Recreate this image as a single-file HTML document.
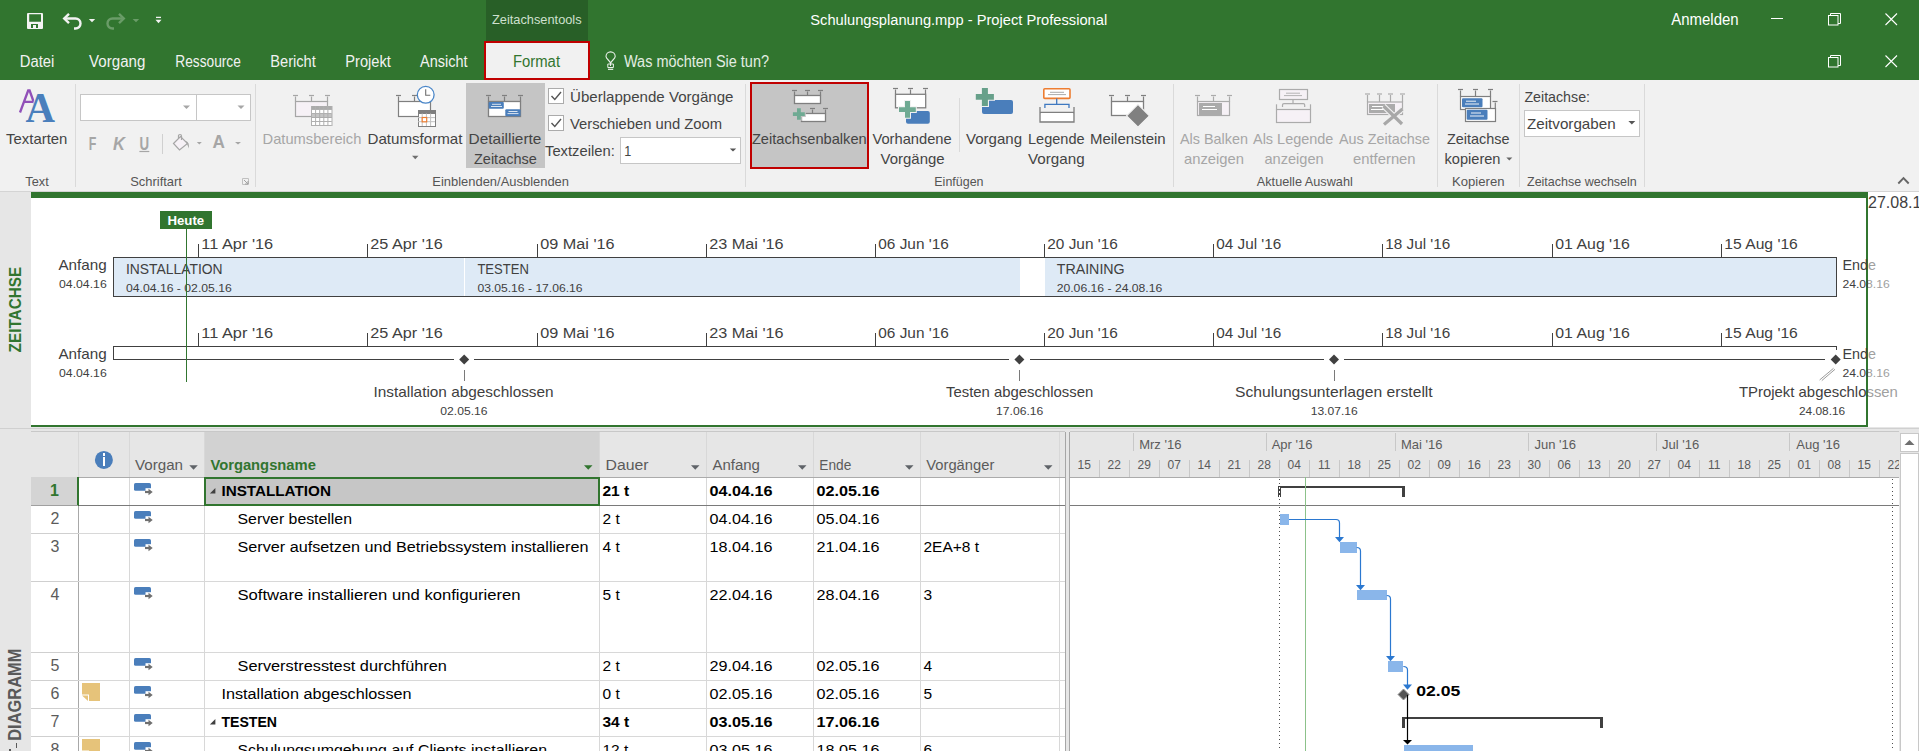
<!DOCTYPE html>
<html><head><meta charset="utf-8"><title>Schulungsplanung.mpp - Project Professional</title>
<style>html,body{margin:0;padding:0;background:#fff;overflow:hidden;width:1919px;height:751px}
svg{display:block;font-family:"Liberation Sans", sans-serif}</style></head>
<body><svg width="1919" height="751" viewBox="0 0 1919 751">
<defs><clipPath id="clipR"><rect x="1868" y="197" width="51" height="230"/></clipPath></defs>
<rect x="0" y="0" width="1919" height="80" fill="#31752F" shape-rendering="crispEdges" />
<rect x="486" y="0" width="102" height="41" fill="#285F27" shape-rendering="crispEdges" />
<text x="492" y="24.4" font-size="13.5" fill="#CFE0CE" textLength="89.6" lengthAdjust="spacingAndGlyphs" >Zeitachsentools</text>
<text x="810.3" y="25" font-size="15.5" fill="#FFFFFF" textLength="296.9" lengthAdjust="spacingAndGlyphs" >Schulungsplanung.mpp - Project Professional</text>
<text x="1671.3" y="25" font-size="16" fill="#FFFFFF" textLength="67.3" lengthAdjust="spacingAndGlyphs" >Anmelden</text>
<line x1="1771" y1="18.5" x2="1783" y2="18.5" stroke="#fff" stroke-width="1" shape-rendering="crispEdges" />
<rect x="1828.5" y="15.5" width="9.5" height="9.5" fill="none" stroke="#fff" stroke-width="1" />
<path d="M1830.5 15.5 V13.5 H1840.5 V23.5 H1838" fill="none" stroke="#fff" stroke-width="1" />
<path d="M1885.5 13.5 L1897 25 M1897 13.5 L1885.5 25" fill="none" stroke="#fff" stroke-width="1.1" />
<rect x="1828.5" y="57.5" width="9.5" height="9.5" fill="none" stroke="#fff" stroke-width="1" />
<path d="M1830.5 57.5 V55.5 H1840.5 V65.5 H1838" fill="none" stroke="#fff" stroke-width="1" />
<path d="M1885.5 55.5 L1897 67 M1897 55.5 L1885.5 67" fill="none" stroke="#fff" stroke-width="1.1" />
<path d="M28 13 H42 Q43 13 43 14 V28 Q43 29 42 29 H28 Q27 29 27 28 V14 Q27 13 28 13 Z M29.2 14.3 V21.7 H41 V14.3 Z M31 24 V28 H38 V24 Z" fill="#F4F4F4" fill-rule="evenodd"/>
<rect x="33" y="25.2" width="3" height="2.8" fill="#F4F4F4" shape-rendering="crispEdges" />
<path d="M65 18.5 H75.5 A5 5 0 0 1 75.5 28.5 H74" fill="none" stroke="#F2F2F2" stroke-width="2.4" />
<path d="M69 13.8 L64.2 18.5 L69 23.2" fill="none" stroke="#F2F2F2" stroke-width="2.4" />
<path d="M88.8 19 H95.2 L92 22.2 Z" fill="#F2F2F2" />
<path d="M123 18.5 H112.5 A5 5 0 0 0 112.5 28.5 H114" fill="none" stroke="#6A9C68" stroke-width="2.4" />
<path d="M119 13.8 L123.8 18.5 L119 23.2" fill="none" stroke="#6A9C68" stroke-width="2.4" />
<path d="M132.6 19 H139.2 L136 22.2 Z" fill="#6A9C68" />
<line x1="156" y1="17.4" x2="161" y2="17.4" stroke="#F2F2F2" stroke-width="1.3" />
<path d="M155.5 19.7 H161.5 L158.5 23.2 Z" fill="#F2F2F2" />
<text x="19.7" y="66.7" font-size="16" fill="#F2F2F2" textLength="34.6" lengthAdjust="spacingAndGlyphs" >Datei</text>
<text x="89.1" y="66.7" font-size="16" fill="#F2F2F2" textLength="56.2" lengthAdjust="spacingAndGlyphs" >Vorgang</text>
<text x="175.3" y="66.7" font-size="16" fill="#F2F2F2" textLength="65.5" lengthAdjust="spacingAndGlyphs" >Ressource</text>
<text x="270.3" y="66.7" font-size="16" fill="#F2F2F2" textLength="45.5" lengthAdjust="spacingAndGlyphs" >Bericht</text>
<text x="345.3" y="66.7" font-size="16" fill="#F2F2F2" textLength="45.5" lengthAdjust="spacingAndGlyphs" >Projekt</text>
<text x="420" y="66.7" font-size="16" fill="#F2F2F2" textLength="47.5" lengthAdjust="spacingAndGlyphs" >Ansicht</text>
<rect x="484" y="41" width="106" height="39" fill="#F1F1F1" shape-rendering="crispEdges" />
<rect x="485" y="42" width="104" height="37" fill="none" stroke="#C00000" stroke-width="2" shape-rendering="crispEdges" />
<text x="513" y="67" font-size="16" fill="#31752F" textLength="47" lengthAdjust="spacingAndGlyphs" >Format</text>
<path d="M610.5 66 V63.5 C610.5 61 606 59 606 56.5 A4.6 4.6 0 0 1 615.2 56.5 C615.2 59 610.7 61 610.7 63.5" fill="none" stroke="#EAF1EA" stroke-width="1.1" />
<path d="M607.8 64 H613.4 V67.5 H607.8 Z" fill="none" stroke="#EAF1EA" stroke-width="1" />
<line x1="608" y1="69.3" x2="613.2" y2="69.3" stroke="#EAF1EA" stroke-width="1.2" />
<text x="624" y="67" font-size="16" fill="#E3EDE2" textLength="145" lengthAdjust="spacingAndGlyphs" >Was möchten Sie tun?</text>
<rect x="0" y="80" width="1919" height="111" fill="#F1F1F1" shape-rendering="crispEdges" />
<line x1="0" y1="191.5" x2="1919" y2="191.5" stroke="#D4D4D4" stroke-width="1" shape-rendering="crispEdges" />
<line x1="75.5" y1="84" x2="75.5" y2="187" stroke="#DADADA" stroke-width="1" shape-rendering="crispEdges" />
<line x1="255.5" y1="84" x2="255.5" y2="187" stroke="#DADADA" stroke-width="1" shape-rendering="crispEdges" />
<line x1="745.5" y1="84" x2="745.5" y2="187" stroke="#DADADA" stroke-width="1" shape-rendering="crispEdges" />
<line x1="1173.5" y1="84" x2="1173.5" y2="187" stroke="#DADADA" stroke-width="1" shape-rendering="crispEdges" />
<line x1="1437.5" y1="84" x2="1437.5" y2="187" stroke="#DADADA" stroke-width="1" shape-rendering="crispEdges" />
<line x1="1519.5" y1="84" x2="1519.5" y2="187" stroke="#DADADA" stroke-width="1" shape-rendering="crispEdges" />
<line x1="1644.5" y1="84" x2="1644.5" y2="187" stroke="#DADADA" stroke-width="1" shape-rendering="crispEdges" />
<path d="M20 112.5 L28.2 90.5 H29.6 L34.8 105 M23.5 101.8 H33.5" fill="none" stroke="#9150B8" stroke-width="2.3" />
<text x="25.5" y="122" font-size="42" fill="#4A7FBC" textLength="29.5" lengthAdjust="spacingAndGlyphs" font-weight="bold" font-family='"Liberation Serif", serif' stroke="#F1F1F1" stroke-width="1.5" paint-order="stroke">A</text>
<text x="6.1" y="143.7" font-size="15" fill="#444444" textLength="61.3" lengthAdjust="spacingAndGlyphs" >Textarten</text>
<text x="25.3" y="185.8" font-size="13" fill="#555" textLength="23.4" lengthAdjust="spacingAndGlyphs" >Text</text>
<rect x="80.5" y="94.5" width="170" height="26" fill="#FFFFFF" stroke="#C6C6C6" stroke-width="1" shape-rendering="crispEdges" />
<line x1="196" y1="95" x2="196" y2="120" stroke="#C6C6C6" stroke-width="1" shape-rendering="crispEdges" />
<path d="M183 105.5 H190 L186.5 109 Z" fill="#A6A6A6" />
<path d="M237.5 105.5 H244.5 L241 109 Z" fill="#A6A6A6" />
<text x="88.8" y="149.9" font-size="17.5" fill="#A6A6A6" textLength="7.6" lengthAdjust="spacingAndGlyphs" font-weight="bold" >F</text>
<text x="113" y="149.9" font-size="17.5" fill="#A6A6A6" textLength="12" lengthAdjust="spacingAndGlyphs" font-weight="bold" style="font-style:italic" >K</text>
<text x="139.6" y="149.9" font-size="17.5" fill="#A6A6A6" textLength="9.6" lengthAdjust="spacingAndGlyphs" font-weight="bold" >U</text>
<line x1="139.4" y1="151.5" x2="149.3" y2="151.5" stroke="#A6A6A6" stroke-width="1.2" />
<line x1="162.5" y1="133.6" x2="162.5" y2="154.3" stroke="#D0D0D0" stroke-width="1" shape-rendering="crispEdges" />
<path d="M173.5 143.5 L180.5 136.5 L187.5 143.5 L179.5 150 Z" fill="#F6F1F6" stroke="#A6A6A6" stroke-width="1.2" />
<path d="M178.5 138.5 V135.5 Q178.5 134.5 180 134.5 Q181.5 134.5 181.5 136 V140" fill="none" stroke="#A6A6A6" stroke-width="1.2" />
<path d="M185.5 141 Q189.5 141.5 189 148.5 L187 144 Z" fill="#A6A6A6" />
<path d="M196.8 142 H201.8 L199.3 144.5 Z" fill="#A6A6A6" />
<text x="212.6" y="147.9" font-size="19" fill="#A6A6A6" textLength="12.4" lengthAdjust="spacingAndGlyphs" font-weight="bold" >A</text>
<path d="M235 142 H241 L238 144.5 Z" fill="#A6A6A6" />
<text x="130.2" y="185.8" font-size="13" fill="#555" textLength="51.7" lengthAdjust="spacingAndGlyphs" >Schriftart</text>
<path d="M242.5 178.5 H248.5 V184.5 H242.5 Z" fill="none" stroke="#C0C0C0" stroke-width="1" />
<path d="M244 180 L248 184 M245 184 H248 V181" fill="none" stroke="#A0A0A0" stroke-width="1" />
<line x1="293.0" y1="95.5" x2="298.0" y2="95.5" stroke="#A6A6A6" stroke-width="1.2" />
<line x1="295.5" y1="96.5" x2="295.5" y2="101.5" stroke="#A6A6A6" stroke-width="1.2" />
<line x1="309.0" y1="95.5" x2="314.0" y2="95.5" stroke="#A6A6A6" stroke-width="1.2" />
<line x1="311.5" y1="96.5" x2="311.5" y2="101.5" stroke="#A6A6A6" stroke-width="1.2" />
<line x1="325.0" y1="95.5" x2="330.0" y2="95.5" stroke="#A6A6A6" stroke-width="1.2" />
<line x1="327.5" y1="96.5" x2="327.5" y2="101.5" stroke="#A6A6A6" stroke-width="1.2" />
<rect x="295.5" y="101.5" width="32" height="15" fill="#F6F1F6" stroke="#A6A6A6" stroke-width="1.2" />
<rect x="311" y="106" width="21" height="20" fill="#FFFFFF" shape-rendering="crispEdges" />
<rect x="311" y="106" width="20.8" height="3.5" fill="#ABABAB" shape-rendering="crispEdges" />
<line x1="311.5" y1="106" x2="311.5" y2="126" stroke="#B0B0B0" stroke-width="1" />
<line x1="315.6" y1="106" x2="315.6" y2="126" stroke="#B0B0B0" stroke-width="1" />
<line x1="319.7" y1="106" x2="319.7" y2="126" stroke="#B0B0B0" stroke-width="1" />
<line x1="323.8" y1="106" x2="323.8" y2="126" stroke="#B0B0B0" stroke-width="1" />
<line x1="327.9" y1="106" x2="327.9" y2="126" stroke="#B0B0B0" stroke-width="1" />
<line x1="332.0" y1="106" x2="332.0" y2="126" stroke="#B0B0B0" stroke-width="1" />
<line x1="311" y1="109.5" x2="331.8" y2="109.5" stroke="#B0B0B0" stroke-width="1" />
<line x1="311" y1="113.5" x2="331.8" y2="113.5" stroke="#B0B0B0" stroke-width="1" />
<line x1="311" y1="117.5" x2="331.8" y2="117.5" stroke="#B0B0B0" stroke-width="1" />
<line x1="311" y1="121.5" x2="331.8" y2="121.5" stroke="#B0B0B0" stroke-width="1" />
<line x1="311" y1="125.5" x2="331.8" y2="125.5" stroke="#B0B0B0" stroke-width="1" />
<rect x="311" y="114" width="21" height="3.5" fill="#ABABAB" shape-rendering="crispEdges" opacity="0.7"/>
<text x="262.6" y="143.7" font-size="15" fill="#A6A6A6" textLength="98.8" lengthAdjust="spacingAndGlyphs" >Datumsbereich</text>
<line x1="396.0" y1="95.5" x2="401.0" y2="95.5" stroke="#7F7F7F" stroke-width="1.2" />
<line x1="398.5" y1="96.5" x2="398.5" y2="101.5" stroke="#7F7F7F" stroke-width="1.2" />
<line x1="412.0" y1="95.5" x2="417.0" y2="95.5" stroke="#7F7F7F" stroke-width="1.2" />
<line x1="414.5" y1="96.5" x2="414.5" y2="101.5" stroke="#7F7F7F" stroke-width="1.2" />
<rect x="398.5" y="101.5" width="32" height="15" fill="#FFFFFF" stroke="#7F7F7F" stroke-width="1.2" />
<rect x="418" y="110" width="17" height="16" fill="#FFFFFF" stroke="#7F7F7F" stroke-width="1" shape-rendering="crispEdges" />
<rect x="418" y="110" width="17" height="3.5" fill="#7F7F7F" shape-rendering="crispEdges" />
<line x1="422.2" y1="113.5" x2="422.2" y2="126" stroke="#C0C0C0" stroke-width="1" />
<line x1="426.4" y1="113.5" x2="426.4" y2="126" stroke="#C0C0C0" stroke-width="1" />
<line x1="430.6" y1="113.5" x2="430.6" y2="126" stroke="#C0C0C0" stroke-width="1" />
<line x1="418" y1="117.6" x2="435" y2="117.6" stroke="#C0C0C0" stroke-width="1" />
<line x1="418" y1="121.7" x2="435" y2="121.7" stroke="#C0C0C0" stroke-width="1" />
<rect x="422.2" y="117.5" width="4.5" height="4.3" fill="#FFFFFF" stroke="#ED7D31" stroke-width="1.2" />
<circle cx="425.7" cy="94.8" r="8.4" fill="#FFFFFF" stroke="#4A86C8" stroke-width="1.3"/>
<path d="M425.7 89.2 V95.2 H430.3" fill="none" stroke="#6F6F6F" stroke-width="1.1" />
<text x="367.5" y="143.7" font-size="15" fill="#444444" textLength="95" lengthAdjust="spacingAndGlyphs" >Datumsformat</text>
<path d="M412 155.8 H418.5 L415.25 159.3 Z" fill="#6F6F6F" />
<rect x="466" y="83" width="79" height="85" fill="#C5C5C5" shape-rendering="crispEdges" />
<line x1="486.0" y1="95.5" x2="491.0" y2="95.5" stroke="#7F7F7F" stroke-width="1.2" />
<line x1="488.5" y1="96.5" x2="488.5" y2="101.5" stroke="#7F7F7F" stroke-width="1.2" />
<line x1="502.0" y1="95.5" x2="507.0" y2="95.5" stroke="#7F7F7F" stroke-width="1.2" />
<line x1="504.5" y1="96.5" x2="504.5" y2="101.5" stroke="#7F7F7F" stroke-width="1.2" />
<line x1="518.0" y1="95.5" x2="523.0" y2="95.5" stroke="#7F7F7F" stroke-width="1.2" />
<line x1="520.5" y1="96.5" x2="520.5" y2="101.5" stroke="#7F7F7F" stroke-width="1.2" />
<rect x="488.5" y="101.5" width="32" height="15" fill="#FFFFFF" stroke="#7F7F7F" stroke-width="1.3" />
<rect x="488.6" y="102" width="15.2" height="6.7" fill="#4A7EBB" rx="1" />
<line x1="492" y1="104.3" x2="501" y2="104.3" stroke="#fff" stroke-width="0.8" />
<line x1="491" y1="106.5" x2="502" y2="106.5" stroke="#fff" stroke-width="0.8" />
<rect x="505.3" y="109.3" width="15.2" height="6.9" fill="#4A7EBB" rx="1" />
<line x1="508.5" y1="111.5" x2="517.5" y2="111.5" stroke="#fff" stroke-width="0.8" />
<line x1="507.5" y1="113.6" x2="518.5" y2="113.6" stroke="#fff" stroke-width="0.8" />
<text x="468.6" y="143.7" font-size="15" fill="#444444" textLength="72.8" lengthAdjust="spacingAndGlyphs" >Detaillierte</text>
<text x="474" y="163.6" font-size="15" fill="#444444" textLength="62.8" lengthAdjust="spacingAndGlyphs" >Zeitachse</text>
<rect x="548.5" y="88.5" width="15" height="15" fill="#FFFFFF" stroke="#ABABAB" stroke-width="1" shape-rendering="crispEdges" />
<path d="M551.5 96 L554.8 99.5 L561 92" fill="none" stroke="#555" stroke-width="1.4" />
<text x="570" y="102" font-size="15" fill="#444444" textLength="163.5" lengthAdjust="spacingAndGlyphs" >Überlappende Vorgänge</text>
<rect x="548.5" y="115.5" width="15" height="15" fill="#FFFFFF" stroke="#ABABAB" stroke-width="1" shape-rendering="crispEdges" />
<path d="M551.5 123 L554.8 126.5 L561 119" fill="none" stroke="#555" stroke-width="1.4" />
<text x="570" y="129" font-size="15" fill="#444444" textLength="152" lengthAdjust="spacingAndGlyphs" >Verschieben und Zoom</text>
<text x="545" y="155.7" font-size="15" fill="#444444" textLength="69.8" lengthAdjust="spacingAndGlyphs" >Textzeilen:</text>
<rect x="620.5" y="137.5" width="120" height="26" fill="#FFFFFF" stroke="#C6C6C6" stroke-width="1" shape-rendering="crispEdges" />
<text x="624.3" y="155.7" font-size="15" fill="#444" textLength="7" lengthAdjust="spacingAndGlyphs" >1</text>
<path d="M729.8 148.5 H736.2 L733 151.5 Z" fill="#555" />
<text x="432.3" y="185.8" font-size="13" fill="#555" textLength="136.7" lengthAdjust="spacingAndGlyphs" >Einblenden/Ausblenden</text>
<rect x="750" y="82" width="119" height="87" fill="#C5C5C5" shape-rendering="crispEdges" />
<rect x="751" y="83" width="117" height="85" fill="none" stroke="#C00000" stroke-width="2" shape-rendering="crispEdges" />
<line x1="792.0" y1="90.5" x2="797.0" y2="90.5" stroke="#7F7F7F" stroke-width="1.2" />
<line x1="794.5" y1="91.5" x2="794.5" y2="95.5" stroke="#7F7F7F" stroke-width="1.2" />
<line x1="805.0" y1="90.5" x2="810.0" y2="90.5" stroke="#7F7F7F" stroke-width="1.2" />
<line x1="807.5" y1="91.5" x2="807.5" y2="95.5" stroke="#7F7F7F" stroke-width="1.2" />
<line x1="818.0" y1="90.5" x2="823.0" y2="90.5" stroke="#7F7F7F" stroke-width="1.2" />
<line x1="820.5" y1="91.5" x2="820.5" y2="95.5" stroke="#7F7F7F" stroke-width="1.2" />
<rect x="794.5" y="95.5" width="26" height="8" fill="#FFFFFF" stroke="#7F7F7F" stroke-width="1.3" />
<line x1="810.0" y1="108.5" x2="815.0" y2="108.5" stroke="#7F7F7F" stroke-width="1.2" />
<line x1="812.5" y1="109.5" x2="812.5" y2="113.5" stroke="#7F7F7F" stroke-width="1.2" />
<line x1="823.0" y1="108.5" x2="828.0" y2="108.5" stroke="#7F7F7F" stroke-width="1.2" />
<line x1="825.5" y1="109.5" x2="825.5" y2="113.5" stroke="#7F7F7F" stroke-width="1.2" />
<rect x="801.5" y="113.5" width="24" height="8" fill="#FFFFFF" stroke="#7F7F7F" stroke-width="1.3" />
<path d="M796 107.2 H801.8 V111.3 H805.8 V117 H801.8 V120.8 H796 V117 H791.9 V111.3 H796 Z" fill="#C5C5C5" />
<path d="M797 108.2 H800.8 V112.3 H804.8 V116 H800.8 V119.8 H797 V116 H792.9 V112.3 H797 Z" fill="#6FAA93" />
<text x="751.9" y="143.7" font-size="15" fill="#444444" textLength="114.8" lengthAdjust="spacingAndGlyphs" >Zeitachsenbalken</text>
<line x1="893.0" y1="88.5" x2="898.0" y2="88.5" stroke="#7F7F7F" stroke-width="1.2" />
<line x1="895.5" y1="89.5" x2="895.5" y2="94" stroke="#7F7F7F" stroke-width="1.2" />
<line x1="908.0" y1="88.5" x2="913.0" y2="88.5" stroke="#7F7F7F" stroke-width="1.2" />
<line x1="910.5" y1="89.5" x2="910.5" y2="94" stroke="#7F7F7F" stroke-width="1.2" />
<line x1="923.0" y1="88.5" x2="928.0" y2="88.5" stroke="#7F7F7F" stroke-width="1.2" />
<line x1="925.5" y1="89.5" x2="925.5" y2="94" stroke="#7F7F7F" stroke-width="1.2" />
<rect x="895.5" y="94.3" width="30.2" height="13.5" fill="#FFFFFF" stroke="#7F7F7F" stroke-width="1.3" />
<rect x="906" y="111" width="23.8" height="12.8" fill="#4A7EBB" rx="2" />
<path d="M904 100 H911 V106.3 H916.8 V113 H911 V118.7 H904 V113 H898 V106.3 H904 Z" fill="#F1F1F1" />
<path d="M905 101 H910 V107.3 H915.8 V111.9 H910 V117.7 H905 V111.9 H899 V107.3 H905 Z" fill="#6FAA93" />
<text x="872.4" y="143.7" font-size="15" fill="#444444" textLength="79.3" lengthAdjust="spacingAndGlyphs" >Vorhandene</text>
<text x="880.6" y="163.6" font-size="15" fill="#444444" textLength="64" lengthAdjust="spacingAndGlyphs" >Vorgänge</text>
<line x1="959.5" y1="98" x2="959.5" y2="152" stroke="#DADADA" stroke-width="1" shape-rendering="crispEdges" />
<rect x="982" y="100.1" width="31" height="13.8" fill="#4A7EBB" rx="2" />
<path d="M981 87 H989 V93 H995 V100.8 H989 V107 H981 V100.8 H975 V93 H981 Z" fill="#F1F1F1" />
<path d="M981.9 88 H987.9 V93.9 H993.9 V99.8 H987.9 V105.9 H981.9 V99.8 H975.8 V93.9 H981.9 Z" fill="#67A08A" />
<text x="966" y="143.7" font-size="15" fill="#444444" textLength="56" lengthAdjust="spacingAndGlyphs" >Vorgang</text>
<rect x="1043.8" y="88.8" width="26.2" height="9.6" fill="#FFFFFF" stroke="#ED7D31" stroke-width="1.6" rx="1" />
<line x1="1050" y1="92.3" x2="1064" y2="92.3" stroke="#A0A0A0" stroke-width="0.9" />
<line x1="1048" y1="94.6" x2="1066" y2="94.6" stroke="#A0A0A0" stroke-width="0.9" />
<path d="M1056.7 98.6 V104.3 M1044.9 108 V104.3 H1069 V108" fill="none" stroke="#3E78C0" stroke-width="1.3" />
<path d="M1040 107 V122 H1074 V107 M1040 112.5 H1074" fill="none" stroke="#7F7F7F" stroke-width="1.3" />
<rect x="1040.7" y="113.2" width="32.6" height="8.2" fill="#FFFFFF" shape-rendering="crispEdges" />
<text x="1028" y="143.7" font-size="15" fill="#444444" textLength="56.6" lengthAdjust="spacingAndGlyphs" >Legende</text>
<text x="1028" y="163.6" font-size="15" fill="#444444" textLength="56.6" lengthAdjust="spacingAndGlyphs" >Vorgang</text>
<line x1="1109.0" y1="95.5" x2="1114.0" y2="95.5" stroke="#7F7F7F" stroke-width="1.2" />
<line x1="1111.5" y1="96.5" x2="1111.5" y2="101.5" stroke="#7F7F7F" stroke-width="1.2" />
<line x1="1125.0" y1="95.5" x2="1130.0" y2="95.5" stroke="#7F7F7F" stroke-width="1.2" />
<line x1="1127.5" y1="96.5" x2="1127.5" y2="101.5" stroke="#7F7F7F" stroke-width="1.2" />
<line x1="1141.0" y1="95.5" x2="1146.0" y2="95.5" stroke="#7F7F7F" stroke-width="1.2" />
<line x1="1143.5" y1="96.5" x2="1143.5" y2="101.5" stroke="#7F7F7F" stroke-width="1.2" />
<rect x="1111.5" y="101.5" width="32" height="14" fill="#FFFFFF" stroke="#7F7F7F" stroke-width="1.3" />
<path d="M1138 104.4 L1149.4 115.8 L1138 127.2 L1126.6 115.8 Z" fill="#808080" stroke="#F1F1F1" stroke-width="1.2" />
<text x="1090" y="143.7" font-size="15" fill="#444444" textLength="75.7" lengthAdjust="spacingAndGlyphs" >Meilenstein</text>
<text x="934.3" y="185.8" font-size="13" fill="#555" textLength="49.2" lengthAdjust="spacingAndGlyphs" >Einfügen</text>
<line x1="1195.0" y1="95.5" x2="1200.0" y2="95.5" stroke="#ABABAB" stroke-width="1.2" />
<line x1="1197.5" y1="96.5" x2="1197.5" y2="101.5" stroke="#ABABAB" stroke-width="1.2" />
<line x1="1211.0" y1="95.5" x2="1216.0" y2="95.5" stroke="#ABABAB" stroke-width="1.2" />
<line x1="1213.5" y1="96.5" x2="1213.5" y2="101.5" stroke="#ABABAB" stroke-width="1.2" />
<line x1="1227.0" y1="95.5" x2="1232.0" y2="95.5" stroke="#ABABAB" stroke-width="1.2" />
<line x1="1229.5" y1="96.5" x2="1229.5" y2="101.5" stroke="#ABABAB" stroke-width="1.2" />
<rect x="1197.5" y="101.5" width="32" height="14" fill="#F6F1F6" stroke="#ABABAB" stroke-width="1.2" />
<rect x="1198.5" y="103" width="23.5" height="11.5" fill="#ABABAB" shape-rendering="crispEdges" />
<line x1="1203" y1="106.5" x2="1215" y2="106.5" stroke="#fff" stroke-width="1" />
<line x1="1202" y1="109.5" x2="1217" y2="109.5" stroke="#fff" stroke-width="1" />
<text x="1180" y="143.7" font-size="15" fill="#A6A6A6" textLength="68" lengthAdjust="spacingAndGlyphs" >Als Balken</text>
<text x="1184" y="163.6" font-size="15" fill="#A6A6A6" textLength="60" lengthAdjust="spacingAndGlyphs" >anzeigen</text>
<rect x="1279.5" y="89.5" width="28" height="10" fill="#F6F1F6" stroke="#ABABAB" stroke-width="1.2" />
<line x1="1286" y1="93.2" x2="1300" y2="93.2" stroke="#ABABAB" stroke-width="0.9" />
<line x1="1284" y1="95.6" x2="1302" y2="95.6" stroke="#ABABAB" stroke-width="0.9" />
<path d="M1293 99.5 V103.7 M1282.5 107 V105 Q1282.5 103.7 1284 103.7 H1303.3 Q1304.7 103.7 1304.7 105 V107" fill="none" stroke="#ABABAB" stroke-width="1.2" />
<rect x="1276.5" y="109.5" width="34" height="13" fill="#F6F1F6" stroke="#ABABAB" stroke-width="1.2" />
<line x1="1276.5" y1="104.3" x2="1276.5" y2="109.5" stroke="#ABABAB" stroke-width="1.2" />
<line x1="1310.5" y1="104.3" x2="1310.5" y2="109.5" stroke="#ABABAB" stroke-width="1.2" />
<text x="1253" y="143.7" font-size="15" fill="#A6A6A6" textLength="80.4" lengthAdjust="spacingAndGlyphs" >Als Legende</text>
<text x="1264.5" y="163.6" font-size="15" fill="#A6A6A6" textLength="59.2" lengthAdjust="spacingAndGlyphs" >anzeigen</text>
<line x1="1365.0" y1="94.0" x2="1370.0" y2="94.0" stroke="#ABABAB" stroke-width="1.2" />
<line x1="1367.5" y1="95.0" x2="1367.5" y2="102" stroke="#ABABAB" stroke-width="1.2" />
<line x1="1377.0" y1="94.0" x2="1382.0" y2="94.0" stroke="#ABABAB" stroke-width="1.2" />
<line x1="1379.5" y1="95.0" x2="1379.5" y2="102" stroke="#ABABAB" stroke-width="1.2" />
<line x1="1388.0" y1="94.0" x2="1393.0" y2="94.0" stroke="#ABABAB" stroke-width="1.2" />
<line x1="1390.5" y1="95.0" x2="1390.5" y2="102" stroke="#ABABAB" stroke-width="1.2" />
<line x1="1400.0" y1="94.0" x2="1405.0" y2="94.0" stroke="#ABABAB" stroke-width="1.2" />
<line x1="1402.5" y1="95.0" x2="1402.5" y2="102" stroke="#ABABAB" stroke-width="1.2" />
<rect x="1367.5" y="102" width="35" height="12.5" fill="#F6F1F6" stroke="#ABABAB" stroke-width="1.2" />
<rect x="1369" y="103.5" width="26" height="9.5" fill="#ABABAB" shape-rendering="crispEdges" />
<line x1="1372" y1="106.5" x2="1384" y2="106.5" stroke="#fff" stroke-width="1" />
<line x1="1371" y1="109.5" x2="1386" y2="109.5" stroke="#fff" stroke-width="1" />
<path d="M1383.5 106 L1402 124 M1402.5 109 L1384 124.5" fill="none" stroke="#F1F1F1" stroke-width="5.5" />
<path d="M1383.5 106 L1402 124 M1402.5 109 L1384 124.5" fill="none" stroke="#A8A8A8" stroke-width="3.2" />
<text x="1339" y="143.7" font-size="15" fill="#A6A6A6" textLength="91" lengthAdjust="spacingAndGlyphs" >Aus Zeitachse</text>
<text x="1353" y="163.6" font-size="15" fill="#A6A6A6" textLength="62.6" lengthAdjust="spacingAndGlyphs" >entfernen</text>
<text x="1256.8" y="185.8" font-size="13" fill="#555" textLength="96" lengthAdjust="spacingAndGlyphs" >Aktuelle Auswahl</text>
<line x1="1458.0" y1="89.5" x2="1463.0" y2="89.5" stroke="#7F7F7F" stroke-width="1.2" />
<line x1="1460.5" y1="90.5" x2="1460.5" y2="96.5" stroke="#7F7F7F" stroke-width="1.2" />
<line x1="1473.0" y1="89.5" x2="1478.0" y2="89.5" stroke="#7F7F7F" stroke-width="1.2" />
<line x1="1475.5" y1="90.5" x2="1475.5" y2="96.5" stroke="#7F7F7F" stroke-width="1.2" />
<line x1="1488.0" y1="89.5" x2="1493.0" y2="89.5" stroke="#7F7F7F" stroke-width="1.2" />
<line x1="1490.5" y1="90.5" x2="1490.5" y2="96.5" stroke="#7F7F7F" stroke-width="1.2" />
<rect x="1460.5" y="96.5" width="30" height="13" fill="#FFFFFF" stroke="#7F7F7F" stroke-width="1.2" />
<rect x="1462" y="98.2" width="20.5" height="9.1" fill="#4A7EBB" rx="1" />
<line x1="1466" y1="101.2" x2="1476" y2="101.2" stroke="#fff" stroke-width="0.9" />
<line x1="1465" y1="104" x2="1479" y2="104" stroke="#fff" stroke-width="0.9" />
<line x1="1492.5" y1="101.5" x2="1497.5" y2="101.5" stroke="#7F7F7F" stroke-width="1.2" />
<line x1="1495.3" y1="102.5" x2="1495.3" y2="108.5" stroke="#7F7F7F" stroke-width="1.2" />
<rect x="1465.5" y="108.5" width="30" height="13" fill="#FFFFFF" stroke="#7F7F7F" stroke-width="1.2" />
<rect x="1466.7" y="109.8" width="20.8" height="10" fill="#4A7EBB" rx="1" />
<line x1="1471" y1="113" x2="1481" y2="113" stroke="#fff" stroke-width="0.9" />
<line x1="1470" y1="116" x2="1484" y2="116" stroke="#fff" stroke-width="0.9" />
<text x="1447" y="143.7" font-size="15" fill="#444444" textLength="62.6" lengthAdjust="spacingAndGlyphs" >Zeitachse</text>
<text x="1444.5" y="163.6" font-size="15" fill="#444444" textLength="56" lengthAdjust="spacingAndGlyphs" >kopieren</text>
<path d="M1506.3 157.5 H1512.3 L1509.3 160.5 Z" fill="#666" />
<text x="1452" y="185.8" font-size="13" fill="#555" textLength="52.5" lengthAdjust="spacingAndGlyphs" >Kopieren</text>
<text x="1524.4" y="102" font-size="15" fill="#444444" textLength="65.6" lengthAdjust="spacingAndGlyphs" >Zeitachse:</text>
<rect x="1524.5" y="110.5" width="115" height="26" fill="#FFFFFF" stroke="#C6C6C6" stroke-width="1" shape-rendering="crispEdges" />
<text x="1527" y="128.5" font-size="15" fill="#444444" textLength="88.6" lengthAdjust="spacingAndGlyphs" >Zeitvorgaben</text>
<path d="M1628.4 121 H1635.3 L1631.85 124.5 Z" fill="#555" />
<text x="1527" y="185.8" font-size="13" fill="#555" textLength="109.8" lengthAdjust="spacingAndGlyphs" >Zeitachse wechseln</text>
<path d="M1898.3 183.5 L1903.5 178.2 L1908.7 183.5" fill="none" stroke="#666" stroke-width="1.9" />
<rect x="0" y="192" width="31" height="236" fill="#E6E6E6" shape-rendering="crispEdges" />
<rect x="31" y="197" width="1888" height="230" fill="#FFFFFF" shape-rendering="crispEdges" />
<rect x="31" y="192" width="1837" height="5.5" fill="#31752F" shape-rendering="crispEdges" />
<rect x="1866" y="197" width="2" height="228" fill="#31752F" shape-rendering="crispEdges" />
<rect x="31" y="425" width="1837" height="2" fill="#31752F" shape-rendering="crispEdges" />
<text x="0" y="0" font-size="17" font-weight="bold" fill="#31752F" textLength="85.6" lengthAdjust="spacingAndGlyphs" transform="translate(21.3 352.4) rotate(-90)">ZEITACHSE</text>
<rect x="160" y="211" width="52" height="18" fill="#31752F" shape-rendering="crispEdges" />
<text x="167.4" y="224.8" font-size="13" fill="#FFFFFF" textLength="36.8" lengthAdjust="spacingAndGlyphs" font-weight="bold" >Heute</text>
<line x1="198.5" y1="243.5" x2="198.5" y2="257" stroke="#404040" stroke-width="1" shape-rendering="crispEdges" />
<text x="201.3" y="249.1" font-size="15.5" fill="#404040" textLength="71.9" lengthAdjust="spacingAndGlyphs" >11 Apr '16</text>
<line x1="367.5" y1="243.5" x2="367.5" y2="257" stroke="#404040" stroke-width="1" shape-rendering="crispEdges" />
<text x="370.3" y="249.1" font-size="15.5" fill="#404040" textLength="72.5" lengthAdjust="spacingAndGlyphs" >25 Apr '16</text>
<line x1="537.5" y1="243.5" x2="537.5" y2="257" stroke="#404040" stroke-width="1" shape-rendering="crispEdges" />
<text x="540.3" y="249.1" font-size="15.5" fill="#404040" textLength="74.3" lengthAdjust="spacingAndGlyphs" >09 Mai '16</text>
<line x1="706.5" y1="243.5" x2="706.5" y2="257" stroke="#404040" stroke-width="1" shape-rendering="crispEdges" />
<text x="709.3" y="249.1" font-size="15.5" fill="#404040" textLength="74.3" lengthAdjust="spacingAndGlyphs" >23 Mai '16</text>
<line x1="875.5" y1="243.5" x2="875.5" y2="257" stroke="#404040" stroke-width="1" shape-rendering="crispEdges" />
<text x="878.3" y="249.1" font-size="15.5" fill="#404040" textLength="70.5" lengthAdjust="spacingAndGlyphs" >06 Jun '16</text>
<line x1="1044.5" y1="243.5" x2="1044.5" y2="257" stroke="#404040" stroke-width="1" shape-rendering="crispEdges" />
<text x="1047.3" y="249.1" font-size="15.5" fill="#404040" textLength="70.5" lengthAdjust="spacingAndGlyphs" >20 Jun '16</text>
<line x1="1213.5" y1="243.5" x2="1213.5" y2="257" stroke="#404040" stroke-width="1" shape-rendering="crispEdges" />
<text x="1216.3" y="249.1" font-size="15.5" fill="#404040" textLength="65" lengthAdjust="spacingAndGlyphs" >04 Jul '16</text>
<line x1="1382.5" y1="243.5" x2="1382.5" y2="257" stroke="#404040" stroke-width="1" shape-rendering="crispEdges" />
<text x="1385.3" y="249.1" font-size="15.5" fill="#404040" textLength="65" lengthAdjust="spacingAndGlyphs" >18 Jul '16</text>
<line x1="1552.5" y1="243.5" x2="1552.5" y2="257" stroke="#404040" stroke-width="1" shape-rendering="crispEdges" />
<text x="1555.3" y="249.1" font-size="15.5" fill="#404040" textLength="74.5" lengthAdjust="spacingAndGlyphs" >01 Aug '16</text>
<line x1="1721.5" y1="243.5" x2="1721.5" y2="257" stroke="#404040" stroke-width="1" shape-rendering="crispEdges" />
<text x="1724.3" y="249.1" font-size="15.5" fill="#404040" textLength="73.5" lengthAdjust="spacingAndGlyphs" >15 Aug '16</text>
<rect x="113.5" y="257.5" width="1723" height="39" fill="#DEEAF6" stroke="#404040" stroke-width="1" shape-rendering="crispEdges" />
<rect x="1019.5" y="258" width="25.5" height="38" fill="#FFFFFF" shape-rendering="crispEdges" />
<line x1="464.5" y1="258" x2="464.5" y2="296" stroke="#FFFFFF" stroke-width="1" shape-rendering="crispEdges" />
<text x="126" y="273.9" font-size="15" fill="#404040" textLength="96.6" lengthAdjust="spacingAndGlyphs" >INSTALLATION</text>
<text x="126" y="291.5" font-size="11.5" fill="#404040" textLength="105.8" lengthAdjust="spacingAndGlyphs" >04.04.16 - 02.05.16</text>
<text x="477.4" y="273.9" font-size="15" fill="#404040" textLength="51.5" lengthAdjust="spacingAndGlyphs" >TESTEN</text>
<text x="477.4" y="291.5" font-size="11.5" fill="#404040" textLength="105.2" lengthAdjust="spacingAndGlyphs" >03.05.16 - 17.06.16</text>
<text x="1056.7" y="273.9" font-size="15" fill="#404040" textLength="68" lengthAdjust="spacingAndGlyphs" >TRAINING</text>
<text x="1056.7" y="291.5" font-size="11.5" fill="#404040" textLength="105.6" lengthAdjust="spacingAndGlyphs" >20.06.16 - 24.08.16</text>
<text x="58.4" y="269.9" font-size="15" fill="#404040" textLength="48.3" lengthAdjust="spacingAndGlyphs" >Anfang</text>
<text x="59" y="287.8" font-size="11.5" fill="#404040" textLength="47.7" lengthAdjust="spacingAndGlyphs" >04.04.16</text>
<text x="1842.4" y="269.9" font-size="15" fill="#404040" textLength="33.5" lengthAdjust="spacingAndGlyphs" >Ende</text>
<text x="1842.4" y="287.8" font-size="11.5" fill="#404040" textLength="47.3" lengthAdjust="spacingAndGlyphs" >24.08.16</text>
<line x1="198.5" y1="333" x2="198.5" y2="346.5" stroke="#404040" stroke-width="1" shape-rendering="crispEdges" />
<text x="201.3" y="338" font-size="15.5" fill="#404040" textLength="71.9" lengthAdjust="spacingAndGlyphs" >11 Apr '16</text>
<line x1="367.5" y1="333" x2="367.5" y2="346.5" stroke="#404040" stroke-width="1" shape-rendering="crispEdges" />
<text x="370.3" y="338" font-size="15.5" fill="#404040" textLength="72.5" lengthAdjust="spacingAndGlyphs" >25 Apr '16</text>
<line x1="537.5" y1="333" x2="537.5" y2="346.5" stroke="#404040" stroke-width="1" shape-rendering="crispEdges" />
<text x="540.3" y="338" font-size="15.5" fill="#404040" textLength="74.3" lengthAdjust="spacingAndGlyphs" >09 Mai '16</text>
<line x1="706.5" y1="333" x2="706.5" y2="346.5" stroke="#404040" stroke-width="1" shape-rendering="crispEdges" />
<text x="709.3" y="338" font-size="15.5" fill="#404040" textLength="74.3" lengthAdjust="spacingAndGlyphs" >23 Mai '16</text>
<line x1="875.5" y1="333" x2="875.5" y2="346.5" stroke="#404040" stroke-width="1" shape-rendering="crispEdges" />
<text x="878.3" y="338" font-size="15.5" fill="#404040" textLength="70.5" lengthAdjust="spacingAndGlyphs" >06 Jun '16</text>
<line x1="1044.5" y1="333" x2="1044.5" y2="346.5" stroke="#404040" stroke-width="1" shape-rendering="crispEdges" />
<text x="1047.3" y="338" font-size="15.5" fill="#404040" textLength="70.5" lengthAdjust="spacingAndGlyphs" >20 Jun '16</text>
<line x1="1213.5" y1="333" x2="1213.5" y2="346.5" stroke="#404040" stroke-width="1" shape-rendering="crispEdges" />
<text x="1216.3" y="338" font-size="15.5" fill="#404040" textLength="65" lengthAdjust="spacingAndGlyphs" >04 Jul '16</text>
<line x1="1382.5" y1="333" x2="1382.5" y2="346.5" stroke="#404040" stroke-width="1" shape-rendering="crispEdges" />
<text x="1385.3" y="338" font-size="15.5" fill="#404040" textLength="65" lengthAdjust="spacingAndGlyphs" >18 Jul '16</text>
<line x1="1552.5" y1="333" x2="1552.5" y2="346.5" stroke="#404040" stroke-width="1" shape-rendering="crispEdges" />
<text x="1555.3" y="338" font-size="15.5" fill="#404040" textLength="74.5" lengthAdjust="spacingAndGlyphs" >01 Aug '16</text>
<line x1="1721.5" y1="333" x2="1721.5" y2="346.5" stroke="#404040" stroke-width="1" shape-rendering="crispEdges" />
<text x="1724.3" y="338" font-size="15.5" fill="#404040" textLength="73.5" lengthAdjust="spacingAndGlyphs" >15 Aug '16</text>
<line x1="113" y1="346.5" x2="1837" y2="346.5" stroke="#404040" stroke-width="1" shape-rendering="crispEdges" />
<line x1="113.5" y1="346" x2="113.5" y2="360" stroke="#404040" stroke-width="1" shape-rendering="crispEdges" />
<line x1="1836.5" y1="346" x2="1836.5" y2="350" stroke="#404040" stroke-width="1" shape-rendering="crispEdges" />
<line x1="113" y1="359.5" x2="453.6" y2="359.5" stroke="#404040" stroke-width="1" shape-rendering="crispEdges" />
<line x1="473.5" y1="359.5" x2="1008.5" y2="359.5" stroke="#404040" stroke-width="1" shape-rendering="crispEdges" />
<line x1="1029.5" y1="359.5" x2="1323.5" y2="359.5" stroke="#404040" stroke-width="1" shape-rendering="crispEdges" />
<line x1="1344" y1="359.5" x2="1825.4" y2="359.5" stroke="#404040" stroke-width="1" shape-rendering="crispEdges" />
<path d="M464.2 354.5 L469.2 359.5 L464.2 364.5 L459.2 359.5 Z" fill="#404040" />
<path d="M1019.4 354.5 L1024.4 359.5 L1019.4 364.5 L1014.4 359.5 Z" fill="#404040" />
<path d="M1334 354.5 L1339 359.5 L1334 364.5 L1329 359.5 Z" fill="#404040" />
<path d="M1835.7 354.5 L1840.7 359.5 L1835.7 364.5 L1830.7 359.5 Z" fill="#404040" />
<line x1="464.5" y1="370" x2="464.5" y2="381" stroke="#7A7A7A" stroke-width="1" shape-rendering="crispEdges" />
<line x1="1019.5" y1="370" x2="1019.5" y2="381" stroke="#7A7A7A" stroke-width="1" shape-rendering="crispEdges" />
<line x1="1334.5" y1="370" x2="1334.5" y2="381" stroke="#7A7A7A" stroke-width="1" shape-rendering="crispEdges" />
<path d="M1819.6 380 L1833.5 368.3 M1821.8 380.6 L1835 369.3" fill="none" stroke="#909090" stroke-width="0.9" />
<text x="58.4" y="358.7" font-size="15" fill="#404040" textLength="48.3" lengthAdjust="spacingAndGlyphs" >Anfang</text>
<text x="59" y="376.8" font-size="11.5" fill="#404040" textLength="47.7" lengthAdjust="spacingAndGlyphs" >04.04.16</text>
<text x="1842.4" y="358.7" font-size="15" fill="#404040" textLength="33.5" lengthAdjust="spacingAndGlyphs" >Ende</text>
<text x="1842.4" y="376.8" font-size="11.5" fill="#404040" textLength="47.3" lengthAdjust="spacingAndGlyphs" >24.08.16</text>
<text x="373.5" y="396.8" font-size="15" fill="#404040" textLength="180.1" lengthAdjust="spacingAndGlyphs" >Installation abgeschlossen</text>
<text x="440.3" y="414.6" font-size="11.5" fill="#404040" textLength="47.2" lengthAdjust="spacingAndGlyphs" >02.05.16</text>
<text x="946" y="396.8" font-size="15" fill="#404040" textLength="147.3" lengthAdjust="spacingAndGlyphs" >Testen abgeschlossen</text>
<text x="996" y="414.6" font-size="11.5" fill="#404040" textLength="47.3" lengthAdjust="spacingAndGlyphs" >17.06.16</text>
<text x="1235" y="396.8" font-size="15" fill="#404040" textLength="197.7" lengthAdjust="spacingAndGlyphs" >Schulungsunterlagen erstellt</text>
<text x="1310.7" y="414.6" font-size="11.5" fill="#404040" textLength="47" lengthAdjust="spacingAndGlyphs" >13.07.16</text>
<text x="1739" y="396.8" font-size="15" fill="#404040" textLength="158.9" lengthAdjust="spacingAndGlyphs" >TProjekt abgeschlossen</text>
<text x="1799" y="414.6" font-size="11.5" fill="#404040" textLength="46.2" lengthAdjust="spacingAndGlyphs" >24.08.16</text>
<line x1="186.5" y1="229" x2="186.5" y2="382" stroke="#31752F" stroke-width="1" shape-rendering="crispEdges" />
<rect x="1868" y="197" width="51" height="230" fill="#FFFFFF" shape-rendering="crispEdges" />
<g clip-path="url(#clipR)">
<text x="1842.4" y="269.9" font-size="15" fill="#A0A0A0" textLength="33.5" lengthAdjust="spacingAndGlyphs" >Ende</text>
<text x="1842.4" y="287.8" font-size="11.5" fill="#A0A0A0" textLength="47.3" lengthAdjust="spacingAndGlyphs" >24.08.16</text>
<text x="1842.4" y="358.7" font-size="15" fill="#A0A0A0" textLength="33.5" lengthAdjust="spacingAndGlyphs" >Ende</text>
<text x="1842.4" y="376.8" font-size="11.5" fill="#A0A0A0" textLength="47.3" lengthAdjust="spacingAndGlyphs" >24.08.16</text>
<text x="1739" y="396.8" font-size="15" fill="#A0A0A0" textLength="158.9" lengthAdjust="spacingAndGlyphs" >TProjekt abgeschlossen</text>
</g>
<text x="1868" y="207.8" font-size="16" fill="#404040" >27.08.16</text>
<rect x="0" y="427" width="1919" height="5" fill="#E6E6E6" shape-rendering="crispEdges" />
<line x1="0" y1="428.5" x2="1919" y2="428.5" stroke="#D0D0D0" stroke-width="1" shape-rendering="crispEdges" />
<rect x="0" y="432" width="31" height="319" fill="#E6E6E6" shape-rendering="crispEdges" />
<text x="0" y="0" font-size="17.5" font-weight="bold" fill="#595959" transform="translate(21.1 740.8) rotate(-90)" textLength="92.3" lengthAdjust="spacingAndGlyphs">DIAGRAMM</text>
<rect x="15.6" y="743.3" width="1.8" height="4.6" fill="#595959" shape-rendering="crispEdges" />
<rect x="9" y="749.2" width="2.2" height="1.8" fill="#595959" shape-rendering="crispEdges" />
<rect x="31" y="431" width="1034" height="46" fill="#E6E6E6" shape-rendering="crispEdges" />
<line x1="31" y1="431.5" x2="1065" y2="431.5" stroke="#C8C8C8" stroke-width="1" shape-rendering="crispEdges" />
<rect x="204" y="432" width="395" height="45" fill="#D2D2D2" shape-rendering="crispEdges" />
<rect x="78" y="477" width="987" height="274" fill="#FFFFFF" shape-rendering="crispEdges" />
<line x1="78.5" y1="432" x2="78.5" y2="477" stroke="#D8D8D8" stroke-width="1" shape-rendering="crispEdges" />
<line x1="78.5" y1="477" x2="78.5" y2="751" stroke="#A8A8A8" stroke-width="1" shape-rendering="crispEdges" />
<line x1="129.5" y1="432" x2="129.5" y2="477" stroke="#D8D8D8" stroke-width="1" shape-rendering="crispEdges" />
<line x1="129.5" y1="477" x2="129.5" y2="751" stroke="#D8D8D8" stroke-width="1" shape-rendering="crispEdges" />
<line x1="204.5" y1="432" x2="204.5" y2="477" stroke="#D8D8D8" stroke-width="1" shape-rendering="crispEdges" />
<line x1="204.5" y1="477" x2="204.5" y2="751" stroke="#D8D8D8" stroke-width="1" shape-rendering="crispEdges" />
<line x1="599.5" y1="432" x2="599.5" y2="477" stroke="#D8D8D8" stroke-width="1" shape-rendering="crispEdges" />
<line x1="599.5" y1="477" x2="599.5" y2="751" stroke="#D8D8D8" stroke-width="1" shape-rendering="crispEdges" />
<line x1="706.5" y1="432" x2="706.5" y2="477" stroke="#D8D8D8" stroke-width="1" shape-rendering="crispEdges" />
<line x1="706.5" y1="477" x2="706.5" y2="751" stroke="#D8D8D8" stroke-width="1" shape-rendering="crispEdges" />
<line x1="813.5" y1="432" x2="813.5" y2="477" stroke="#D8D8D8" stroke-width="1" shape-rendering="crispEdges" />
<line x1="813.5" y1="477" x2="813.5" y2="751" stroke="#D8D8D8" stroke-width="1" shape-rendering="crispEdges" />
<line x1="920.5" y1="432" x2="920.5" y2="477" stroke="#D8D8D8" stroke-width="1" shape-rendering="crispEdges" />
<line x1="920.5" y1="477" x2="920.5" y2="751" stroke="#D8D8D8" stroke-width="1" shape-rendering="crispEdges" />
<line x1="1059.5" y1="432" x2="1059.5" y2="477" stroke="#D8D8D8" stroke-width="1" shape-rendering="crispEdges" />
<line x1="1059.5" y1="477" x2="1059.5" y2="751" stroke="#D8D8D8" stroke-width="1" shape-rendering="crispEdges" />
<line x1="1065.5" y1="432" x2="1065.5" y2="751" stroke="#A6A6A6" stroke-width="1" shape-rendering="crispEdges" />
<line x1="31" y1="477.5" x2="1065" y2="477.5" stroke="#ABABAB" stroke-width="1" shape-rendering="crispEdges" />
<circle cx="103.9" cy="459.9" r="9" fill="#4A7EBB"/>
<rect x="102.6" y="457" width="2.6" height="8.5" fill="#FFFFFF" shape-rendering="crispEdges" />
<rect x="102.6" y="453" width="2.6" height="2.6" fill="#FFFFFF" shape-rendering="crispEdges" />
<text x="135" y="469.8" font-size="15.5" fill="#5B5B5B" textLength="48" lengthAdjust="spacingAndGlyphs" >Vorgan</text>
<path d="M189.3 465.3 H197.8 L193.55 469.8 Z" fill="#5F6368" />
<text x="210.4" y="469.8" font-size="15.5" fill="#31752F" textLength="105.5" lengthAdjust="spacingAndGlyphs" font-weight="bold" >Vorgangsname</text>
<path d="M584 465.3 H592.5 L588.25 469.8 Z" fill="#31752F" />
<text x="605.6" y="469.8" font-size="15.5" fill="#5B5B5B" textLength="43" lengthAdjust="spacingAndGlyphs" >Dauer</text>
<path d="M691 465.3 H699.5 L695.25 469.8 Z" fill="#5F6368" />
<text x="712.4" y="469.8" font-size="15.5" fill="#5B5B5B" textLength="47.5" lengthAdjust="spacingAndGlyphs" >Anfang</text>
<path d="M798 465.3 H806.5 L802.25 469.8 Z" fill="#5F6368" />
<text x="819.3" y="469.8" font-size="15.5" fill="#5B5B5B" textLength="32" lengthAdjust="spacingAndGlyphs" >Ende</text>
<path d="M905 465.3 H913.5 L909.25 469.8 Z" fill="#5F6368" />
<text x="926.3" y="469.8" font-size="15.5" fill="#5B5B5B" textLength="68" lengthAdjust="spacingAndGlyphs" >Vorgänger</text>
<path d="M1044 465.3 H1052.5 L1048.25 469.8 Z" fill="#5F6368" />
<rect x="31" y="477" width="47" height="28" fill="#D4D4D4" shape-rendering="crispEdges" />
<line x1="31" y1="505.5" x2="78" y2="505.5" stroke="#CFCFCF" stroke-width="1" shape-rendering="crispEdges" />
<line x1="78" y1="505.5" x2="1065" y2="505.5" stroke="#D8D8D8" stroke-width="1" shape-rendering="crispEdges" />
<text x="54.5" y="495.8" font-size="16" fill="#31752F" font-weight="bold" text-anchor="middle" >1</text>
<rect x="134" y="483" width="17" height="7.8" fill="#4A7EBB" rx="1.6" />
<rect x="145.5" y="488.2" width="6" height="3" fill="#FFFFFF" />
<path d="M145 492 H150" fill="none" stroke="#6F6F6F" stroke-width="2.2" />
<path d="M148.5 488.8 L152.7 492 L148.5 495.2 Z" fill="#6F6F6F" />
<path d="M215.4 493.5 L209.9 493.5 L215.4 488 Z" fill="#404040" />
<text x="221.4" y="495.8" font-size="15.5" fill="#000000" textLength="109.5" lengthAdjust="spacingAndGlyphs" font-weight="bold" >INSTALLATION</text>
<text x="602.5" y="495.8" font-size="15.5" fill="#000000" font-weight="bold" >21 t</text>
<text x="709.5" y="495.8" font-size="15.5" fill="#000000" textLength="63" lengthAdjust="spacingAndGlyphs" font-weight="bold" >04.04.16</text>
<text x="816.5" y="495.8" font-size="15.5" fill="#000000" textLength="63" lengthAdjust="spacingAndGlyphs" font-weight="bold" >02.05.16</text>
<line x1="31" y1="533.5" x2="78" y2="533.5" stroke="#CFCFCF" stroke-width="1" shape-rendering="crispEdges" />
<line x1="78" y1="533.5" x2="1065" y2="533.5" stroke="#D8D8D8" stroke-width="1" shape-rendering="crispEdges" />
<text x="55" y="523.8" font-size="16" fill="#5B5B5B" text-anchor="middle" >2</text>
<rect x="134" y="511" width="17" height="7.8" fill="#4A7EBB" rx="1.6" />
<rect x="145.5" y="516.2" width="6" height="3" fill="#FFFFFF" />
<path d="M145 520 H150" fill="none" stroke="#6F6F6F" stroke-width="2.2" />
<path d="M148.5 516.8 L152.7 520 L148.5 523.2 Z" fill="#6F6F6F" />
<text x="237.5" y="523.8" font-size="15.5" fill="#000000" textLength="114.5" lengthAdjust="spacingAndGlyphs" >Server bestellen</text>
<text x="602.5" y="523.8" font-size="15.5" fill="#000000" >2 t</text>
<text x="709.5" y="523.8" font-size="15.5" fill="#000000" textLength="63" lengthAdjust="spacingAndGlyphs" >04.04.16</text>
<text x="816.5" y="523.8" font-size="15.5" fill="#000000" textLength="63" lengthAdjust="spacingAndGlyphs" >05.04.16</text>
<line x1="31" y1="581.5" x2="78" y2="581.5" stroke="#CFCFCF" stroke-width="1" shape-rendering="crispEdges" />
<line x1="78" y1="581.5" x2="1065" y2="581.5" stroke="#D8D8D8" stroke-width="1" shape-rendering="crispEdges" />
<text x="55" y="551.8" font-size="16" fill="#5B5B5B" text-anchor="middle" >3</text>
<rect x="134" y="539" width="17" height="7.8" fill="#4A7EBB" rx="1.6" />
<rect x="145.5" y="544.2" width="6" height="3" fill="#FFFFFF" />
<path d="M145 548 H150" fill="none" stroke="#6F6F6F" stroke-width="2.2" />
<path d="M148.5 544.8 L152.7 548 L148.5 551.2 Z" fill="#6F6F6F" />
<text x="237.5" y="551.8" font-size="15.5" fill="#000000" textLength="351" lengthAdjust="spacingAndGlyphs" >Server aufsetzen und Betriebssystem installieren</text>
<text x="602.5" y="551.8" font-size="15.5" fill="#000000" >4 t</text>
<text x="709.5" y="551.8" font-size="15.5" fill="#000000" textLength="63" lengthAdjust="spacingAndGlyphs" >18.04.16</text>
<text x="816.5" y="551.8" font-size="15.5" fill="#000000" textLength="63" lengthAdjust="spacingAndGlyphs" >21.04.16</text>
<text x="923.5" y="551.8" font-size="15.5" fill="#000000" >2EA+8 t</text>
<line x1="31" y1="652.5" x2="78" y2="652.5" stroke="#CFCFCF" stroke-width="1" shape-rendering="crispEdges" />
<line x1="78" y1="652.5" x2="1065" y2="652.5" stroke="#D8D8D8" stroke-width="1" shape-rendering="crispEdges" />
<text x="55" y="599.8" font-size="16" fill="#5B5B5B" text-anchor="middle" >4</text>
<rect x="134" y="587" width="17" height="7.8" fill="#4A7EBB" rx="1.6" />
<rect x="145.5" y="592.2" width="6" height="3" fill="#FFFFFF" />
<path d="M145 596 H150" fill="none" stroke="#6F6F6F" stroke-width="2.2" />
<path d="M148.5 592.8 L152.7 596 L148.5 599.2 Z" fill="#6F6F6F" />
<text x="237.5" y="599.8" font-size="15.5" fill="#000000" textLength="283.1" lengthAdjust="spacingAndGlyphs" >Software installieren und konfigurieren</text>
<text x="602.5" y="599.8" font-size="15.5" fill="#000000" >5 t</text>
<text x="709.5" y="599.8" font-size="15.5" fill="#000000" textLength="63" lengthAdjust="spacingAndGlyphs" >22.04.16</text>
<text x="816.5" y="599.8" font-size="15.5" fill="#000000" textLength="63" lengthAdjust="spacingAndGlyphs" >28.04.16</text>
<text x="923.5" y="599.8" font-size="15.5" fill="#000000" >3</text>
<line x1="31" y1="680.5" x2="78" y2="680.5" stroke="#CFCFCF" stroke-width="1" shape-rendering="crispEdges" />
<line x1="78" y1="680.5" x2="1065" y2="680.5" stroke="#D8D8D8" stroke-width="1" shape-rendering="crispEdges" />
<text x="55" y="670.8" font-size="16" fill="#5B5B5B" text-anchor="middle" >5</text>
<rect x="134" y="658" width="17" height="7.8" fill="#4A7EBB" rx="1.6" />
<rect x="145.5" y="663.2" width="6" height="3" fill="#FFFFFF" />
<path d="M145 667 H150" fill="none" stroke="#6F6F6F" stroke-width="2.2" />
<path d="M148.5 663.8 L152.7 667 L148.5 670.2 Z" fill="#6F6F6F" />
<text x="237.5" y="670.8" font-size="15.5" fill="#000000" textLength="209.4" lengthAdjust="spacingAndGlyphs" >Serverstresstest durchführen</text>
<text x="602.5" y="670.8" font-size="15.5" fill="#000000" >2 t</text>
<text x="709.5" y="670.8" font-size="15.5" fill="#000000" textLength="63" lengthAdjust="spacingAndGlyphs" >29.04.16</text>
<text x="816.5" y="670.8" font-size="15.5" fill="#000000" textLength="63" lengthAdjust="spacingAndGlyphs" >02.05.16</text>
<text x="923.5" y="670.8" font-size="15.5" fill="#000000" >4</text>
<line x1="31" y1="708.5" x2="78" y2="708.5" stroke="#CFCFCF" stroke-width="1" shape-rendering="crispEdges" />
<line x1="78" y1="708.5" x2="1065" y2="708.5" stroke="#D8D8D8" stroke-width="1" shape-rendering="crispEdges" />
<text x="55" y="698.8" font-size="16" fill="#5B5B5B" text-anchor="middle" >6</text>
<rect x="134" y="686" width="17" height="7.8" fill="#4A7EBB" rx="1.6" />
<rect x="145.5" y="691.2" width="6" height="3" fill="#FFFFFF" />
<path d="M145 695 H150" fill="none" stroke="#6F6F6F" stroke-width="2.2" />
<path d="M148.5 691.8 L152.7 695 L148.5 698.2 Z" fill="#6F6F6F" />
<path d="M82 683 H100 V701 H89 V694.5 H82 Z" fill="#E6C37A" />
<path d="M82 695.5 H88 V701 Z" fill="#E6C37A" />
<text x="221.4" y="698.8" font-size="15.5" fill="#000000" textLength="190.2" lengthAdjust="spacingAndGlyphs" >Installation abgeschlossen</text>
<text x="602.5" y="698.8" font-size="15.5" fill="#000000" >0 t</text>
<text x="709.5" y="698.8" font-size="15.5" fill="#000000" textLength="63" lengthAdjust="spacingAndGlyphs" >02.05.16</text>
<text x="816.5" y="698.8" font-size="15.5" fill="#000000" textLength="63" lengthAdjust="spacingAndGlyphs" >02.05.16</text>
<text x="923.5" y="698.8" font-size="15.5" fill="#000000" >5</text>
<line x1="31" y1="736.5" x2="78" y2="736.5" stroke="#CFCFCF" stroke-width="1" shape-rendering="crispEdges" />
<line x1="78" y1="736.5" x2="1065" y2="736.5" stroke="#D8D8D8" stroke-width="1" shape-rendering="crispEdges" />
<text x="55" y="726.8" font-size="16" fill="#5B5B5B" text-anchor="middle" >7</text>
<rect x="134" y="714" width="17" height="7.8" fill="#4A7EBB" rx="1.6" />
<rect x="145.5" y="719.2" width="6" height="3" fill="#FFFFFF" />
<path d="M145 723 H150" fill="none" stroke="#6F6F6F" stroke-width="2.2" />
<path d="M148.5 719.8 L152.7 723 L148.5 726.2 Z" fill="#6F6F6F" />
<path d="M215.4 724.5 L209.9 724.5 L215.4 719 Z" fill="#404040" />
<text x="221.4" y="726.8" font-size="15.5" fill="#000000" textLength="55.6" lengthAdjust="spacingAndGlyphs" font-weight="bold" >TESTEN</text>
<text x="602.5" y="726.8" font-size="15.5" fill="#000000" font-weight="bold" >34 t</text>
<text x="709.5" y="726.8" font-size="15.5" fill="#000000" textLength="63" lengthAdjust="spacingAndGlyphs" font-weight="bold" >03.05.16</text>
<text x="816.5" y="726.8" font-size="15.5" fill="#000000" textLength="63" lengthAdjust="spacingAndGlyphs" font-weight="bold" >17.06.16</text>
<line x1="31" y1="764.5" x2="78" y2="764.5" stroke="#CFCFCF" stroke-width="1" shape-rendering="crispEdges" />
<line x1="78" y1="764.5" x2="1065" y2="764.5" stroke="#D8D8D8" stroke-width="1" shape-rendering="crispEdges" />
<text x="55" y="754.8" font-size="16" fill="#5B5B5B" text-anchor="middle" >8</text>
<rect x="134" y="742" width="17" height="7.8" fill="#4A7EBB" rx="1.6" />
<rect x="145.5" y="747.2" width="6" height="3" fill="#FFFFFF" />
<path d="M145 751 H150" fill="none" stroke="#6F6F6F" stroke-width="2.2" />
<path d="M148.5 747.8 L152.7 751 L148.5 754.2 Z" fill="#6F6F6F" />
<path d="M82 739 H100 V757 H89 V750.5 H82 Z" fill="#E6C37A" />
<path d="M82 751.5 H88 V757 Z" fill="#E6C37A" />
<text x="237.5" y="754.8" font-size="15.5" fill="#000000" textLength="309.5" lengthAdjust="spacingAndGlyphs" >Schulungsumgebung auf Clients installieren</text>
<text x="602.5" y="754.8" font-size="15.5" fill="#000000" >12 t</text>
<text x="709.5" y="754.8" font-size="15.5" fill="#000000" textLength="63" lengthAdjust="spacingAndGlyphs" >03.05.16</text>
<text x="816.5" y="754.8" font-size="15.5" fill="#000000" textLength="63" lengthAdjust="spacingAndGlyphs" >18.05.16</text>
<text x="923.5" y="754.8" font-size="15.5" fill="#000000" >6</text>
<line x1="78" y1="505.5" x2="1065" y2="505.5" stroke="#7A7A7A" stroke-width="1" shape-rendering="crispEdges" />
<line x1="78" y1="477" x2="78" y2="506" stroke="#31752F" stroke-width="2" shape-rendering="crispEdges" />
<line x1="31" y1="505.5" x2="78" y2="505.5" stroke="#A0A0A0" stroke-width="1" shape-rendering="crispEdges" />
<rect x="204" y="477" width="396" height="29" fill="#C6C6C6" shape-rendering="crispEdges" />
<rect x="205" y="478" width="394" height="27" fill="none" stroke="#31752F" stroke-width="2" shape-rendering="crispEdges" />
<path d="M215.4 493.5 L209.9 493.5 L215.4 488 Z" fill="#404040" />
<text x="221.4" y="495.8" font-size="15.5" fill="#000000" textLength="109.5" lengthAdjust="spacingAndGlyphs" font-weight="bold" >INSTALLATION</text>
<rect x="1066" y="431" width="3.5" height="320" fill="#E6E6E6" shape-rendering="crispEdges" />
<rect x="1070" y="431" width="830" height="46" fill="#E6E6E6" shape-rendering="crispEdges" />
<line x1="1070" y1="431.5" x2="1900" y2="431.5" stroke="#C8C8C8" stroke-width="1" shape-rendering="crispEdges" />
<rect x="1070" y="477" width="830" height="274" fill="#FFFFFF" shape-rendering="crispEdges" />
<line x1="1069.5" y1="432" x2="1069.5" y2="751" stroke="#A6A6A6" stroke-width="1" shape-rendering="crispEdges" />
<line x1="1070" y1="477.5" x2="1899" y2="477.5" stroke="#ABABAB" stroke-width="1" shape-rendering="crispEdges" />
<line x1="1070" y1="505.5" x2="1899" y2="505.5" stroke="#7A7A7A" stroke-width="1" shape-rendering="crispEdges" />
<line x1="1133.5" y1="433" x2="1133.5" y2="451" stroke="#C8C8C8" stroke-width="1" shape-rendering="crispEdges" />
<text x="1139.2" y="448.8" font-size="13" fill="#5B5B5B" >Mrz '16</text>
<line x1="1266.5" y1="433" x2="1266.5" y2="451" stroke="#C8C8C8" stroke-width="1" shape-rendering="crispEdges" />
<text x="1271.7" y="448.8" font-size="13" fill="#5B5B5B" >Apr '16</text>
<line x1="1395.5" y1="433" x2="1395.5" y2="451" stroke="#C8C8C8" stroke-width="1" shape-rendering="crispEdges" />
<text x="1401" y="448.8" font-size="13" fill="#5B5B5B" >Mai '16</text>
<line x1="1528.5" y1="433" x2="1528.5" y2="451" stroke="#C8C8C8" stroke-width="1" shape-rendering="crispEdges" />
<text x="1534.5" y="448.8" font-size="13" fill="#5B5B5B" >Jun '16</text>
<line x1="1656.5" y1="433" x2="1656.5" y2="451" stroke="#C8C8C8" stroke-width="1" shape-rendering="crispEdges" />
<text x="1662" y="448.8" font-size="13" fill="#5B5B5B" >Jul '16</text>
<line x1="1789.5" y1="433" x2="1789.5" y2="451" stroke="#C8C8C8" stroke-width="1" shape-rendering="crispEdges" />
<text x="1796.3" y="448.8" font-size="13" fill="#5B5B5B" >Aug '16</text>
<clipPath id="gclip"><rect x="1070" y="431" width="829" height="320"/></clipPath>
<g clip-path="url(#gclip)">
<text x="1084.2" y="468.7" font-size="12" fill="#5B5B5B" text-anchor="middle" >15</text>
<line x1="1099.5" y1="460" x2="1099.5" y2="477" stroke="#C8C8C8" stroke-width="1" shape-rendering="crispEdges" />
<text x="1114.2" y="468.7" font-size="12" fill="#5B5B5B" text-anchor="middle" >22</text>
<line x1="1129.5" y1="460" x2="1129.5" y2="477" stroke="#C8C8C8" stroke-width="1" shape-rendering="crispEdges" />
<text x="1144.2" y="468.7" font-size="12" fill="#5B5B5B" text-anchor="middle" >29</text>
<line x1="1159.5" y1="460" x2="1159.5" y2="477" stroke="#C8C8C8" stroke-width="1" shape-rendering="crispEdges" />
<text x="1174.2" y="468.7" font-size="12" fill="#5B5B5B" text-anchor="middle" >07</text>
<line x1="1189.5" y1="460" x2="1189.5" y2="477" stroke="#C8C8C8" stroke-width="1" shape-rendering="crispEdges" />
<text x="1204.2" y="468.7" font-size="12" fill="#5B5B5B" text-anchor="middle" >14</text>
<line x1="1219.5" y1="460" x2="1219.5" y2="477" stroke="#C8C8C8" stroke-width="1" shape-rendering="crispEdges" />
<text x="1234.2" y="468.7" font-size="12" fill="#5B5B5B" text-anchor="middle" >21</text>
<line x1="1249.5" y1="460" x2="1249.5" y2="477" stroke="#C8C8C8" stroke-width="1" shape-rendering="crispEdges" />
<text x="1264.2" y="468.7" font-size="12" fill="#5B5B5B" text-anchor="middle" >28</text>
<line x1="1279.5" y1="460" x2="1279.5" y2="477" stroke="#C8C8C8" stroke-width="1" shape-rendering="crispEdges" />
<text x="1294.2" y="468.7" font-size="12" fill="#5B5B5B" text-anchor="middle" >04</text>
<line x1="1309.5" y1="460" x2="1309.5" y2="477" stroke="#C8C8C8" stroke-width="1" shape-rendering="crispEdges" />
<text x="1324.2" y="468.7" font-size="12" fill="#5B5B5B" text-anchor="middle" >11</text>
<line x1="1339.5" y1="460" x2="1339.5" y2="477" stroke="#C8C8C8" stroke-width="1" shape-rendering="crispEdges" />
<text x="1354.2" y="468.7" font-size="12" fill="#5B5B5B" text-anchor="middle" >18</text>
<line x1="1369.5" y1="460" x2="1369.5" y2="477" stroke="#C8C8C8" stroke-width="1" shape-rendering="crispEdges" />
<text x="1384.2" y="468.7" font-size="12" fill="#5B5B5B" text-anchor="middle" >25</text>
<line x1="1399.5" y1="460" x2="1399.5" y2="477" stroke="#C8C8C8" stroke-width="1" shape-rendering="crispEdges" />
<text x="1414.2" y="468.7" font-size="12" fill="#5B5B5B" text-anchor="middle" >02</text>
<line x1="1429.5" y1="460" x2="1429.5" y2="477" stroke="#C8C8C8" stroke-width="1" shape-rendering="crispEdges" />
<text x="1444.2" y="468.7" font-size="12" fill="#5B5B5B" text-anchor="middle" >09</text>
<line x1="1459.5" y1="460" x2="1459.5" y2="477" stroke="#C8C8C8" stroke-width="1" shape-rendering="crispEdges" />
<text x="1474.2" y="468.7" font-size="12" fill="#5B5B5B" text-anchor="middle" >16</text>
<line x1="1489.5" y1="460" x2="1489.5" y2="477" stroke="#C8C8C8" stroke-width="1" shape-rendering="crispEdges" />
<text x="1504.2" y="468.7" font-size="12" fill="#5B5B5B" text-anchor="middle" >23</text>
<line x1="1519.5" y1="460" x2="1519.5" y2="477" stroke="#C8C8C8" stroke-width="1" shape-rendering="crispEdges" />
<text x="1534.2" y="468.7" font-size="12" fill="#5B5B5B" text-anchor="middle" >30</text>
<line x1="1549.5" y1="460" x2="1549.5" y2="477" stroke="#C8C8C8" stroke-width="1" shape-rendering="crispEdges" />
<text x="1564.2" y="468.7" font-size="12" fill="#5B5B5B" text-anchor="middle" >06</text>
<line x1="1579.5" y1="460" x2="1579.5" y2="477" stroke="#C8C8C8" stroke-width="1" shape-rendering="crispEdges" />
<text x="1594.2" y="468.7" font-size="12" fill="#5B5B5B" text-anchor="middle" >13</text>
<line x1="1609.5" y1="460" x2="1609.5" y2="477" stroke="#C8C8C8" stroke-width="1" shape-rendering="crispEdges" />
<text x="1624.2" y="468.7" font-size="12" fill="#5B5B5B" text-anchor="middle" >20</text>
<line x1="1639.5" y1="460" x2="1639.5" y2="477" stroke="#C8C8C8" stroke-width="1" shape-rendering="crispEdges" />
<text x="1654.2" y="468.7" font-size="12" fill="#5B5B5B" text-anchor="middle" >27</text>
<line x1="1669.5" y1="460" x2="1669.5" y2="477" stroke="#C8C8C8" stroke-width="1" shape-rendering="crispEdges" />
<text x="1684.2" y="468.7" font-size="12" fill="#5B5B5B" text-anchor="middle" >04</text>
<line x1="1699.5" y1="460" x2="1699.5" y2="477" stroke="#C8C8C8" stroke-width="1" shape-rendering="crispEdges" />
<text x="1714.2" y="468.7" font-size="12" fill="#5B5B5B" text-anchor="middle" >11</text>
<line x1="1729.5" y1="460" x2="1729.5" y2="477" stroke="#C8C8C8" stroke-width="1" shape-rendering="crispEdges" />
<text x="1744.2" y="468.7" font-size="12" fill="#5B5B5B" text-anchor="middle" >18</text>
<line x1="1759.5" y1="460" x2="1759.5" y2="477" stroke="#C8C8C8" stroke-width="1" shape-rendering="crispEdges" />
<text x="1774.2" y="468.7" font-size="12" fill="#5B5B5B" text-anchor="middle" >25</text>
<line x1="1789.5" y1="460" x2="1789.5" y2="477" stroke="#C8C8C8" stroke-width="1" shape-rendering="crispEdges" />
<text x="1804.2" y="468.7" font-size="12" fill="#5B5B5B" text-anchor="middle" >01</text>
<line x1="1819.5" y1="460" x2="1819.5" y2="477" stroke="#C8C8C8" stroke-width="1" shape-rendering="crispEdges" />
<text x="1834.2" y="468.7" font-size="12" fill="#5B5B5B" text-anchor="middle" >08</text>
<line x1="1849.5" y1="460" x2="1849.5" y2="477" stroke="#C8C8C8" stroke-width="1" shape-rendering="crispEdges" />
<text x="1864.2" y="468.7" font-size="12" fill="#5B5B5B" text-anchor="middle" >15</text>
<line x1="1879.5" y1="460" x2="1879.5" y2="477" stroke="#C8C8C8" stroke-width="1" shape-rendering="crispEdges" />
<text x="1894.2" y="468.7" font-size="12" fill="#5B5B5B" text-anchor="middle" >22</text>
</g>
<line x1="1279.5" y1="479" x2="1279.5" y2="751" stroke="#505050" stroke-width="1" shape-rendering="crispEdges" stroke-dasharray="1 3"/>
<line x1="1892.5" y1="479" x2="1892.5" y2="751" stroke="#505050" stroke-width="1" shape-rendering="crispEdges" stroke-dasharray="1 3"/>
<rect x="1278" y="486" width="127" height="2" fill="#404040" shape-rendering="crispEdges" />
<rect x="1278" y="486" width="3" height="11" fill="#404040" shape-rendering="crispEdges" />
<rect x="1402" y="486" width="3" height="11" fill="#404040" shape-rendering="crispEdges" />
<rect x="1402" y="717" width="201" height="2" fill="#404040" shape-rendering="crispEdges" />
<rect x="1402" y="717" width="3" height="11" fill="#404040" shape-rendering="crispEdges" />
<rect x="1600" y="717" width="3" height="11" fill="#404040" shape-rendering="crispEdges" />
<line x1="1279.5" y1="487" x2="1279.5" y2="497" stroke="#FFFFFF" stroke-width="1" shape-rendering="crispEdges" stroke-dasharray="2 2"/>
<line x1="1305.5" y1="477" x2="1305.5" y2="751" stroke="#8CC28A" stroke-width="1" shape-rendering="crispEdges" />
<rect x="1280" y="514.3" width="8.8" height="10.3" fill="#8AB6EA" shape-rendering="crispEdges" />
<rect x="1340" y="542.3" width="16.7" height="10.2" fill="#8AB6EA" shape-rendering="crispEdges" />
<rect x="1357.4" y="590.3" width="29.4" height="10" fill="#8AB6EA" shape-rendering="crispEdges" />
<rect x="1387.5" y="661.3" width="15.8" height="10.3" fill="#8AB6EA" shape-rendering="crispEdges" />
<rect x="1404" y="745" width="69" height="10" fill="#8AB6EA" shape-rendering="crispEdges" />
<path d="M1289 519.5 H1336 Q1339.5 519.5 1339.5 523 V538" fill="none" stroke="#2B78D0" stroke-width="1.2" />
<path d="M1335 537 L1339.5 542.2 L1344 537 Z" fill="#2B78D0" />
<path d="M1356.7 547.5 Q1360.5 547.5 1360.5 551 V586" fill="none" stroke="#2B78D0" stroke-width="1.2" />
<path d="M1356 585 L1360.5 590.2 L1365 585 Z" fill="#2B78D0" />
<path d="M1386.8 595.5 Q1390.5 595.5 1390.5 599 V657" fill="none" stroke="#2B78D0" stroke-width="1.2" />
<path d="M1386 656 L1390.5 661.2 L1395 656 Z" fill="#2B78D0" />
<path d="M1403.3 666.5 Q1407.5 666.5 1407.5 670 V685" fill="none" stroke="#2B78D0" stroke-width="1.2" />
<path d="M1403 684.5 L1407.5 689.7 L1412 684.5 Z" fill="#2B78D0" />
<path d="M1403.5 689 L1409 694.5 L1403.5 700 L1398 694.5 Z" fill="#555555" stroke="#9A9A9A" stroke-width="1" />
<line x1="1407.5" y1="695" x2="1407.5" y2="741" stroke="#000" stroke-width="1.2" />
<path d="M1403 740 L1407.5 744.5 L1412 740 Z" fill="#000" />
<text x="1416.2" y="695.5" font-size="15.5" fill="#000" textLength="44.1" lengthAdjust="spacingAndGlyphs" font-weight="bold" >02.05</text>
<rect x="1899" y="431" width="20" height="320" fill="#E6E6E6" shape-rendering="crispEdges" />
<rect x="1900.5" y="433.5" width="18" height="18" fill="#FFFFFF" stroke="#C8C8C8" stroke-width="1" shape-rendering="crispEdges" />
<path d="M1904.5 445 L1909.5 440 L1914.5 445 Z" fill="#6F6F6F" />
<rect x="1900.5" y="453.5" width="18" height="300" fill="#FFFFFF" stroke="#C8C8C8" stroke-width="1" shape-rendering="crispEdges" />
</svg></body></html>
